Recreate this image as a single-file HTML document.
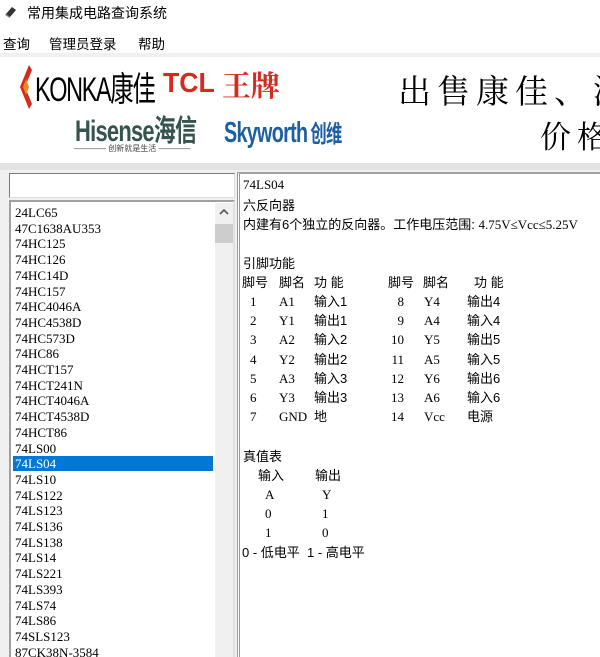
<!DOCTYPE html>
<html><head><meta charset="utf-8"><style>
*{margin:0;padding:0;box-sizing:border-box}
html,body{width:600px;height:657px;overflow:hidden}
body{background:#f0f0f0;font-family:"Liberation Sans","Noto Sans CJK SC",sans-serif;position:relative;color:#000}
#w{position:absolute;left:0;top:0;width:600px;height:657px;overflow:hidden}
.a{position:absolute;white-space:nowrap}
.cj{font-family:"Liberation Sans","Noto Sans CJK SC",sans-serif;font-size:13px}
.mono{font-family:"Liberation Serif","Noto Sans CJK SC",serif;font-size:13px}
</style></head><body><div id="w">
<div class="a" style="left:0;top:0;width:600px;height:53px;background:#fff"></div>
<svg class="a" style="left:4px;top:5px" width="14" height="14"><polygon points="2,9 8,2 12,5 6,12" fill="#333"/><polygon points="2,9 6,12 6,13 1,10" fill="#777"/></svg>
<div class="a cj" style="left:27px;top:3px;font-size:14px">常用集成电路查询系统</div>
<div class="a cj" style="left:3px;top:33px;font-size:13.5px">查询</div>
<div class="a cj" style="left:49px;top:33px;font-size:13.5px">管理员登录</div>
<div class="a cj" style="left:138px;top:33px;font-size:13.5px">帮助</div>
<div class="a" style="left:0;top:57px;width:600px;height:106px;background:#fff"></div>
<svg class="a" style="left:17px;top:64px" width="16" height="46"><path d="M12,1 L3,23 L12,45 L15,40 L8,23 L15,6 Z" fill="#d52b1e"/><path d="M9,15 L6,23 L9,31 L12,23Z" fill="#f08a1c"/></svg>
<div class="a" style="left:35px;top:62px;font-size:34px;letter-spacing:-2px;transform:scaleX(.69);transform-origin:left">KONKA<span style="font-family:'Noto Sans CJK SC'">康佳</span></div>
<div class="a" style="left:163px;top:67px;font-size:28px;font-weight:bold;color:#d42a20;transform:scaleX(.95);transform-origin:left">TCL</div>
<div class="a" style="left:222px;top:64px;font-size:29px;color:#d42a20;font-family:'Noto Serif CJK SC',serif;font-weight:bold">王牌</div>
<div class="a" style="left:75px;top:106px;font-size:30px;font-weight:bold;color:#35534f;letter-spacing:-1px;transform:scaleX(.73);transform-origin:left">Hisense<span style="font-family:'Noto Sans CJK SC'">海信</span></div>
<div class="a" style="left:74px;top:143px;font-size:8px;color:#444">———— 创新就是生活 ————</div>
<div class="a" style="left:224px;top:114px;font-size:29px;font-weight:bold;color:#1c5fa3;letter-spacing:-1px;transform:scaleX(.68);transform-origin:left">Skyworth<span style="font-size:24px;font-family:'Noto Sans CJK SC'"> 创维</span></div>
<div class="a" style="left:398px;top:66px;font-size:33px;font-family:'Noto Serif CJK SC',serif;letter-spacing:6px">出售康佳、海</div>
<div class="a" style="left:540px;top:112px;font-size:31px;font-family:'Noto Serif CJK SC',serif;letter-spacing:6px">价格</div>
<div class="a" style="left:0;top:163px;width:600px;height:7px;background:#e3e3e3"></div>
<div class="a" style="left:9px;top:173px;width:226px;height:25px;background:#fff;border:1px solid #7a7a7a;border-bottom-color:#ddd;border-right-color:#ddd"></div>
<div class="a" style="left:9px;top:200px;width:226px;height:460px;background:#fff;border:2px solid #a0a0a0;border-right-color:#e0e0e0"></div>
<div class="a" style="left:215px;top:203px;width:18px;height:454px;background:#f0f0f0"></div>
<svg class="a" style="left:219px;top:208px" width="10" height="8"><path d="M1,6 L5,2 L9,6" stroke="#555" stroke-width="1.6" fill="none"/></svg>
<div class="a" style="left:215px;top:224px;width:18px;height:19px;background:#cdcdcd"></div>
<div class="a" style="left:13px;top:456px;width:200px;height:15px;background:#0078d7"></div>
<div class="a mono" style="left:15px;top:205px;line-height:15.7px">24LC65<br>47C1638AU353<br>74HC125<br>74HC126<br>74HC14D<br>74HC157<br>74HC4046A<br>74HC4538D<br>74HC573D<br>74HC86<br>74HCT157<br>74HCT241N<br>74HCT4046A<br>74HCT4538D<br>74HCT86<br>74LS00<br><span style="color:#fff">74LS04</span><br>74LS10<br>74LS122<br>74LS123<br>74LS136<br>74LS138<br>74LS14<br>74LS221<br>74LS393<br>74LS74<br>74LS86<br>74SLS123<br>87CK38N-3584</div>
<div class="a" style="left:237px;top:172px;width:363px;height:485px;background:#fff;border-left:3px double #999;border-top:2px solid #a0a0a0"></div>
<div class="a mono" style="left:243px;top:177px">74LS04</div>
<div class="a cj" style="left:243px;top:195px">六反向器</div>
<div class="a cj" style="left:243px;top:214px">内建有6个独立的反向器。工作电压范围: <span class="mono">4.75V≤Vcc≤5.25V</span></div>
<div class="a cj" style="left:243px;top:253px">引脚功能</div>
<div class="a cj" style="left:242px;top:272px">脚号</div><div class="a cj" style="left:279px;top:272px">脚名</div><div class="a cj" style="left:314px;top:272px">功 能</div>
<div class="a cj" style="left:388px;top:272px">脚号</div><div class="a cj" style="left:423px;top:272px">脚名</div><div class="a cj" style="left:474px;top:272px">功 能</div>
<div class="a mono" style="left:250px;top:292px;line-height:19.2px">1<br>2<br>3<br>4<br>5<br>6<br>7</div>
<div class="a mono" style="left:279px;top:292px;line-height:19.2px">A1<br>Y1<br>A2<br>Y2<br>A3<br>Y3<br>GND</div>
<div class="a cj" style="left:314px;top:292px;line-height:19.2px">输入1<br>输出1<br>输入2<br>输出2<br>输入3<br>输出3<br>地</div>
<div class="a mono" style="left:388px;top:292px;line-height:19.2px;text-align:right;width:16px">8<br>9<br>10<br>11<br>12<br>13<br>14</div>
<div class="a mono" style="left:424px;top:292px;line-height:19.2px">Y4<br>A4<br>Y5<br>A5<br>Y6<br>A6<br>Vcc</div>
<div class="a cj" style="left:467px;top:292px;line-height:19.2px">输出4<br>输入4<br>输出5<br>输入5<br>输出6<br>输入6<br>电源</div>
<div class="a cj" style="left:243px;top:446px">真值表</div>
<div class="a cj" style="left:258px;top:465px">输入</div><div class="a cj" style="left:315px;top:465px">输出</div>
<div class="a mono" style="left:265px;top:485px;line-height:19.2px">A<br>0<br>1</div>
<div class="a mono" style="left:322px;top:485px;line-height:19.2px">Y<br>1<br>0</div>
<div class="a cj" style="left:242px;top:542px">0 - 低电平 &nbsp;1 - 高电平</div>
</div></body></html>
